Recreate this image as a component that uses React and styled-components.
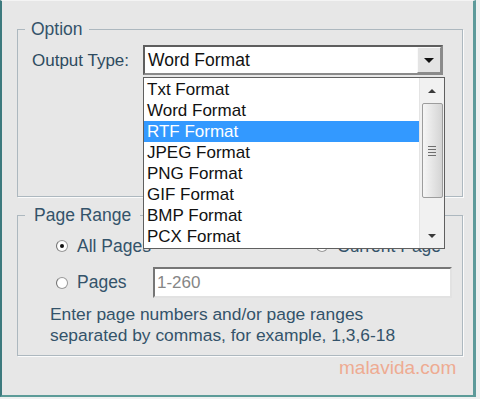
import React from "react";
import styled, { createGlobalStyle } from "styled-components";

const Global = createGlobalStyle`
  body {
    margin: 0;
    background: #eef0f0;
    font-family: "Liberation Sans", Arial, sans-serif;
  }
`;

const Window = styled.div`
  position: relative;
  width: 476px;
  height: 397px;
  box-sizing: border-box;
  background: #e7e7e7;
  border-left: 2px solid #3d7a7e;
  border-right: 3px solid #5d9a9a;
  border-bottom: 2px solid #5c9b98;
  border-top: 1px solid #f4f4f4;
  padding: 19px 0 0 15px;
`;

const Group = styled.fieldset`
  margin: ${(p) => p.$top}px 0 0 0;
  padding: 0;
  min-width: 0;
  width: 446px;
  height: ${(p) => p.$h}px;
  box-sizing: border-box;
  border: 1px solid #adb8bf;
  box-shadow: 1px 1px 0 #fbfbfb;
`;

const Caption = styled.legend`
  margin-left: 7px;
  padding: 0 ${(p) => p.$pad}px;
  font-size: 17.5px;
  line-height: 18px;
  color: #34536a;
`;

const GroupBody = styled.div`
  padding: ${(p) => p.$pt}px 0 0 14px;
`;

const Row = styled.div`
  display: flex;
  align-items: center;
`;

const Label = styled.span`
  width: 111px;
  padding-top: 2px;
  font-size: 17px;
  color: #2e4b60;
`;

const SelectBox = styled.div`
  position: relative;
  display: flex;
  align-items: center;
  width: 300px;
  height: 30px;
  box-sizing: border-box;
  background: #fff;
  border: 2px solid #8a8a8a;
  border-top-color: #5e5e5e;
  border-left-color: #5e5e5e;
`;

const SelectValue = styled.span`
  flex: 1;
  padding-left: 3px;
  font-size: 17.5px;
  color: #111;
`;

const DropButton = styled.div`
  display: flex;
  align-items: center;
  justify-content: center;
  width: 24px;
  height: 26px;
  box-sizing: border-box;
  background: #e4e4e4;
  border: 1px solid #8c8c8c;
  border-top-color: #fafafa;
  border-left-color: #fafafa;
`;

const Arrow = styled.span`
  width: 0;
  height: 0;
  border-left: ${(p) => p.$size}px solid transparent;
  border-right: ${(p) => p.$size}px solid transparent;
  ${(p) => (p.$up ? "border-bottom" : "border-top")}: ${(p) => p.$size}px solid ${(p) => p.$color};
`;

const List = styled.div`
  position: absolute;
  top: 30px;
  left: -2px;
  z-index: 2;
  display: flex;
  width: 302px;
  height: 172px;
  box-sizing: border-box;
  background: #fff;
  border: 1px solid #5f5f5f;
`;

const Items = styled.div`
  flex: 1;
  padding-top: 1px;
`;

const Item = styled.div`
  height: 21px;
  line-height: 21px;
  padding-left: 3px;
  font-size: 17px;
  color: ${(p) => (p.$active ? "#fff" : "#111")};
  background: ${(p) => (p.$active ? "#3399ff" : "transparent")};
`;

const Scrollbar = styled.div`
  display: flex;
  flex-direction: column;
  align-items: center;
  width: 24px;
  background: #f1f1f1;
  border-left: 1px solid #e4e4e4;
`;

const ScrollArrow = styled.div`
  display: flex;
  align-items: center;
  justify-content: center;
  height: ${(p) => p.$h}px;
`;

const Spacer = styled.div`
  flex: 1;
`;

const Thumb = styled.div`
  display: flex;
  flex-direction: column;
  align-items: center;
  justify-content: center;
  gap: 2px;
  width: 21px;
  height: 95px;
  box-sizing: border-box;
  border: 1px solid #9d9d9d;
  border-radius: 2px;
  background: linear-gradient(to right, #f6f6f6, #e2e2e2 60%, #d4d4d4);
`;

const Grip = styled.span`
  width: 8px;
  height: 1px;
  background: #6e6e6e;
`;

const RadioRow = styled.div`
  display: flex;
  align-items: center;
  height: ${(p) => p.$h}px;
  margin-top: ${(p) => p.$mt}px;
  padding-left: 24px;
`;

const Choice = styled.div`
  display: flex;
  align-items: center;
  width: ${(p) => p.$w}px;
`;

const Radio = styled.span`
  position: relative;
  width: 12px;
  height: 12px;
  box-sizing: border-box;
  border-radius: 50%;
  border: 1px solid #9a9a9a;
  border-left-color: #6f6f6f;
  background: radial-gradient(circle at 60% 60%, #ffffff 55%, #e6e6e6);
  &::after {
    content: "";
    display: ${(p) => (p.$checked ? "block" : "none")};
    position: absolute;
    left: 3px;
    top: 3px;
    width: 4px;
    height: 4px;
    border-radius: 50%;
    background: #111;
  }
`;

const ChoiceText = styled.span`
  margin-left: 9px;
  font-size: 17.5px;
  color: #34536a;
`;

const PagesInput = styled.div`
  display: flex;
  align-items: center;
  width: 299px;
  height: 31px;
  box-sizing: border-box;
  padding-left: 2px;
  background: #fff;
  border: 2px solid #e2e2e2;
  border-top-color: #767676;
  border-left-color: #767676;
  font-size: 17px;
  color: #868686;
`;

const Help = styled.p`
  margin: 6px 0 0 18px;
  font-size: 17.4px;
  line-height: 21px;
  color: #34536a;
`;

const Watermark = styled.span`
  position: absolute;
  left: 337px;
  top: 356px;
  font-size: 19px;
  color: #eeab92;
`;

const formats = [
  "Txt Format",
  "Word Format",
  "RTF Format",
  "JPEG Format",
  "PNG Format",
  "GIF Format",
  "BMP Format",
  "PCX Format",
];

export default function App() {
  return (
    <>
      <Global />
      <Window>
        <Group $top={0} $h={177}>
          <Caption $pad={6}>Option</Caption>
          <GroupBody $pt={7}>
            <Row>
              <Label>Output Type:</Label>
              <SelectBox>
                <SelectValue>Word Format</SelectValue>
                <DropButton>
                  <Arrow $size={5} $color="#111" />
                </DropButton>
                <List>
                  <Items>
                    {formats.map((f) => (
                      <Item key={f} $active={f === "RTF Format"}>
                        {f}
                      </Item>
                    ))}
                  </Items>
                  <Scrollbar>
                    <ScrollArrow $h={25}>
                      <Arrow $up $size={4} $color="#3a3a3a" />
                    </ScrollArrow>
                    <Thumb>
                      <Grip />
                      <Grip />
                      <Grip />
                      <Grip />
                    </Thumb>
                    <Spacer />
                    <ScrollArrow $h={24}>
                      <Arrow $size={4} $color="#3a3a3a" />
                    </ScrollArrow>
                  </Scrollbar>
                </List>
              </SelectBox>
            </Row>
          </GroupBody>
        </Group>

        <Group $top={9} $h={150}>
          <Caption $pad={9}>Page Range</Caption>
          <GroupBody $pt={0}>
            <RadioRow $h={20} $mt={12}>
              <Choice $w={260}>
                <Radio $checked />
                <ChoiceText>All Pages</ChoiceText>
              </Choice>
              <Choice $w={140}>
                <Radio />
                <ChoiceText>Current Page</ChoiceText>
              </Choice>
            </RadioRow>
            <RadioRow $h={31} $mt={11}>
              <Choice $w={97}>
                <Radio />
                <ChoiceText>Pages</ChoiceText>
              </Choice>
              <PagesInput>1-260</PagesInput>
            </RadioRow>
            <Help>
              Enter page numbers and/or page ranges
              <br />
              separated by commas, for example, 1,3,6-18
            </Help>
          </GroupBody>
        </Group>

        <Watermark>malavida.com</Watermark>
      </Window>
    </>
  );
}
